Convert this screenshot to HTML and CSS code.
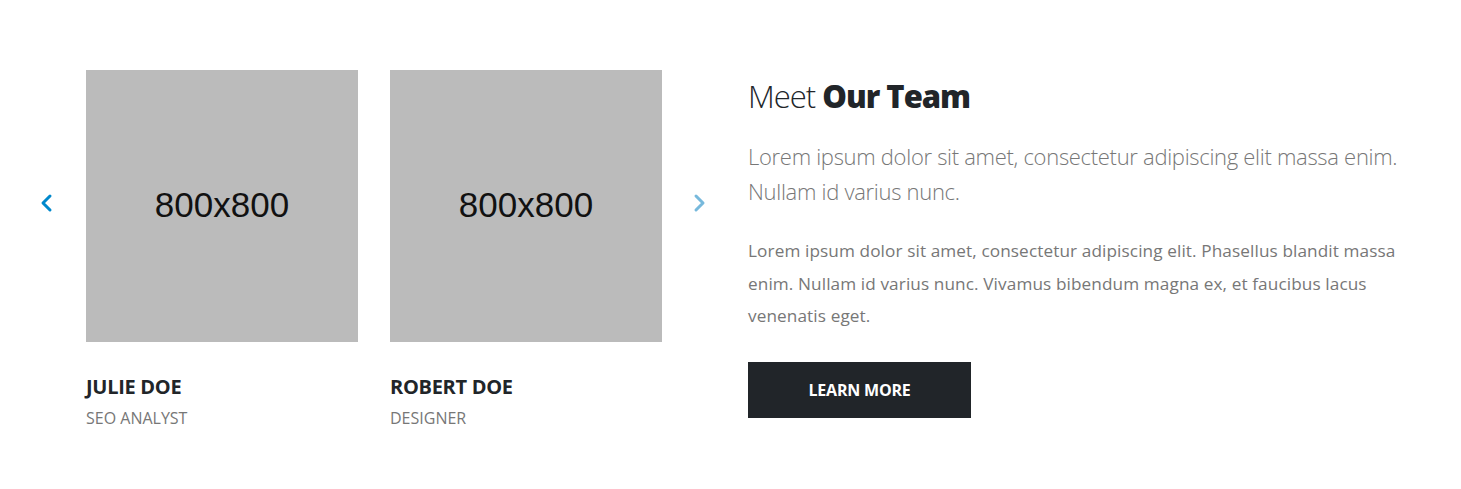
FILE: index.html
```html
<!DOCTYPE html>
<html lang="en">
<head>
<meta charset="utf-8">
<title>Meet Our Team</title>
<link rel="stylesheet" href="styles.css">
</head>
<body>
<section class="team">
  <div class="carousel">
    <button class="nav nav-prev" aria-label="Previous">
      <svg width="14" height="20" viewBox="0 0 14 20"><polyline points="10,3 3,10 10,17" fill="none" stroke="currentColor" stroke-width="3" stroke-linecap="round" stroke-linejoin="round"/></svg>
    </button>
    <div class="cards">
      <div class="card">
        <div class="photo">800x800</div>
        <h3 class="name">JULIE DOE</h3>
        <p class="role">SEO ANALYST</p>
      </div>
      <div class="card">
        <div class="photo">800x800</div>
        <h3 class="name">ROBERT DOE</h3>
        <p class="role">DESIGNER</p>
      </div>
    </div>
    <button class="nav nav-next" aria-label="Next">
      <svg width="14" height="20" viewBox="0 0 14 20"><polyline points="4,3 11,10 4,17" fill="none" stroke="currentColor" stroke-width="3" stroke-linecap="round" stroke-linejoin="round"/></svg>
    </button>
  </div>
  <div class="intro">
    <h2 class="title">Meet <strong>Our Team</strong></h2>
    <p class="lead">Lorem ipsum dolor sit amet, consectetur adipiscing elit massa enim. Nullam id varius nunc.</p>
    <p class="text">Lorem ipsum dolor sit amet, consectetur adipiscing elit. Phasellus blandit massa enim. Nullam id varius nunc. Vivamus bibendum magna ex, et faucibus lacus venenatis eget.</p>
    <a class="btn" href="#">LEARN MORE</a>
  </div>
</section>
</body>
</html>
```
FILE: styles.css
```css
* { box-sizing: border-box; }
html, body { margin: 0; padding: 0; background: #fff; }
body {
  font-family: "Open Sans", "Noto Sans", sans-serif;
  color: #777;
}
.team {
  display: flex;
  align-items: flex-start;
  padding: 70px 0 0 30px;
}
.carousel {
  display: flex;
  align-items: flex-start;
}
.nav {
  width: 56px;
  height: 272px;
  padding: 0 0 6px;
  border: 0;
  background: none;
  display: flex;
  align-items: center;
  justify-content: center;
  cursor: pointer;
}
.nav-prev { color: #0088cc; justify-content: flex-start; padding-left: 10px; }
.nav-next { color: #77b9dc; justify-content: flex-start; padding-left: 30px; width: 86px; }
.cards {
  display: flex;
  gap: 32px;
}
.card { width: 272px; }
.photo {
  width: 272px;
  height: 272px;
  background: #bbbbbb;
  display: flex;
  align-items: center;
  justify-content: center;
  font-family: "Liberation Sans", Arial, sans-serif;
  font-size: 35px;
  color: #111;
  padding-bottom: 2px;
}
.name {
  margin: 33px 0 0;
  font-size: 20px;
  line-height: 24px;
  font-weight: 700;
  color: #212529;
  letter-spacing: -0.3px;
}
.role {
  margin: 7px 0 0;
  font-size: 16px;
  line-height: 24px;
  color: #777;
}
.intro {
  width: 662px;
  padding-top: 8px;
}
.title {
  margin: 0;
  font-size: 31px;
  line-height: 37px;
  font-weight: 300;
  color: #212529;
  letter-spacing: -1px;
}
.title strong { font-weight: 800; }
.lead {
  margin: 24px 0 0;
  font-size: 22px;
  line-height: 35px;
  font-weight: 300;
  letter-spacing: -0.3px;
  color: #777;
}
.text {
  margin: 26px 0 0;
  font-size: 17.2px;
  line-height: 32.5px;
  letter-spacing: 0.1px;
  color: #777;
}
.btn {
  display: inline-block;
  margin-top: 29px;
  width: 223px;
  height: 56px;
  line-height: 56px;
  text-align: center;
  background: #212529;
  color: #fff;
  font-size: 16px;
  font-weight: 700;
  text-decoration: none;
  letter-spacing: -0.2px;
}
```
